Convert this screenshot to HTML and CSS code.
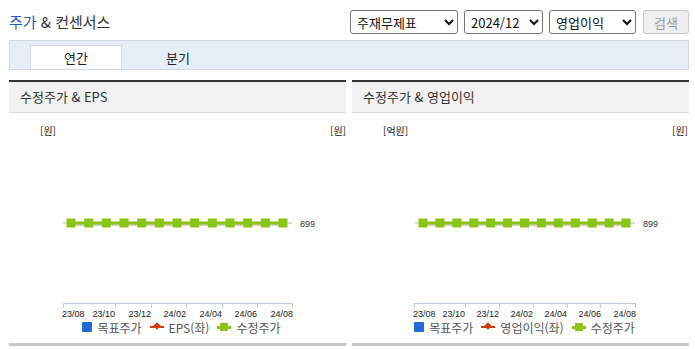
FILE: index.html
```html
<!DOCTYPE html>
<html lang="ko">

<head>
    <meta charset="UTF-8">
    <meta name="viewport" content="width=device-width, initial-scale=1.0">
    <title>주가 &amp; 컨센서스</title>
    <link rel="stylesheet" href="styles.css">
</head>

<body>
    <div class="wrap">
        <div class="top">
            <h2 class="title"><span class="accent">주가</span> &amp; 컨센서스</h2>
            <div class="filters">
                <select class="sel sel-fin">
                    <option>주재무제표</option>
                </select>
                <select class="sel sel-year">
                    <option>2024/12</option>
                </select>
                <select class="sel sel-item">
                    <option>영업이익</option>
                </select>
                <button class="btn" disabled>검색</button>
            </div>
        </div>

        <div class="tabs">
            <a class="tab on">연간</a>
            <a class="tab">분기</a>
        </div>

        <div class="charts">
            <!-- 수정주가 & EPS -->
            <div class="panel">
                <div class="panel-head">수정주가 &amp; EPS</div>
                <svg class="plot" width="337" height="205" viewBox="0 0 337 205">
                    <text class="unit" x="31" y="22">[원]</text>
                    <text class="unit" x="321" y="22">[원]</text>
                    <line x1="54" y1="110" x2="283" y2="110" stroke="#dcdcdc" stroke-width="2" />
                    <line x1="62" y1="112" x2="274" y2="112" stroke="#cfcfcf" stroke-width="2" />
                    <line x1="62" y1="110" x2="274" y2="110" stroke="#8cc414" stroke-width="3" />
                    <g fill="#8cc414">
                        <rect x="57.5" y="105.5" width="9" height="9" />
                        <rect x="75.2" y="105.5" width="9" height="9" />
                        <rect x="92.8" y="105.5" width="9" height="9" />
                        <rect x="110.5" y="105.5" width="9" height="9" />
                        <rect x="128.2" y="105.5" width="9" height="9" />
                        <rect x="145.8" y="105.5" width="9" height="9" />
                        <rect x="163.5" y="105.5" width="9" height="9" />
                        <rect x="181.2" y="105.5" width="9" height="9" />
                        <rect x="198.8" y="105.5" width="9" height="9" />
                        <rect x="216.5" y="105.5" width="9" height="9" />
                        <rect x="234.2" y="105.5" width="9" height="9" />
                        <rect x="251.8" y="105.5" width="9" height="9" />
                        <rect x="269.5" y="105.5" width="9" height="9" />
                    </g>
                    <text class="val" x="291" y="113.5">899</text>
                    <g stroke="#c3cddb" stroke-width="1">
                        <line x1="54" y1="190.5" x2="283" y2="190.5" />
                        <line x1="54.5" y1="190" x2="54.5" y2="195" />
                        <line x1="106.5" y1="190" x2="106.5" y2="195" />
                        <line x1="142.5" y1="190" x2="142.5" y2="195" />
                        <line x1="177.5" y1="190" x2="177.5" y2="195" />
                        <line x1="213.5" y1="190" x2="213.5" y2="195" />
                        <line x1="248.5" y1="190" x2="248.5" y2="195" />
                        <line x1="283.5" y1="190" x2="283.5" y2="195" />
                    </g>
                    <g class="tick">
                        <text x="53" y="203.5">23/08</text>
                        <text x="106" y="203.5" text-anchor="end">23/10</text>
                        <text x="142" y="203.5" text-anchor="end">23/12</text>
                        <text x="177" y="203.5" text-anchor="end">24/02</text>
                        <text x="213" y="203.5" text-anchor="end">24/04</text>
                        <text x="248" y="203.5" text-anchor="end">24/06</text>
                        <text x="284" y="203.5" text-anchor="end">24/08</text>
                    </g>
                </svg>
                <div class="legend">
                    <span class="lg"><i class="ico-box"></i>목표주가</span>
                    <span class="lg"><i class="ico-line red"><b></b></i>EPS(좌)</span>
                    <span class="lg"><i class="ico-line green"><b></b></i>수정주가</span>
                </div>
            </div>

            <!-- 수정주가 & 영업이익 -->
            <div class="panel">
                <div class="panel-head">수정주가 &amp; 영업이익</div>
                <svg class="plot" width="337" height="205" viewBox="0 0 337 205">
                    <text class="unit" x="31" y="22">[억원]</text>
                    <text class="unit" x="320" y="22">[원]</text>
                    <line x1="63" y1="110" x2="283" y2="110" stroke="#dcdcdc" stroke-width="2" />
                    <line x1="71" y1="112" x2="274" y2="112" stroke="#cfcfcf" stroke-width="2" />
                    <line x1="71" y1="110" x2="274" y2="110" stroke="#8cc414" stroke-width="3" />
                    <g fill="#8cc414">
                        <rect x="66.5" y="105.5" width="9" height="9" />
                        <rect x="83.4" y="105.5" width="9" height="9" />
                        <rect x="100.3" y="105.5" width="9" height="9" />
                        <rect x="117.3" y="105.5" width="9" height="9" />
                        <rect x="134.2" y="105.5" width="9" height="9" />
                        <rect x="151.1" y="105.5" width="9" height="9" />
                        <rect x="168" y="105.5" width="9" height="9" />
                        <rect x="184.9" y="105.5" width="9" height="9" />
                        <rect x="201.8" y="105.5" width="9" height="9" />
                        <rect x="218.8" y="105.5" width="9" height="9" />
                        <rect x="235.7" y="105.5" width="9" height="9" />
                        <rect x="252.6" y="105.5" width="9" height="9" />
                        <rect x="269.5" y="105.5" width="9" height="9" />
                    </g>
                    <text class="val" x="291" y="113.5">899</text>
                    <g stroke="#c3cddb" stroke-width="1">
                        <line x1="62" y1="190.5" x2="283" y2="190.5" />
                        <line x1="62.5" y1="190" x2="62.5" y2="195" />
                        <line x1="113.5" y1="190" x2="113.5" y2="195" />
                        <line x1="147.5" y1="190" x2="147.5" y2="195" />
                        <line x1="181.5" y1="190" x2="181.5" y2="195" />
                        <line x1="215.5" y1="190" x2="215.5" y2="195" />
                        <line x1="248.5" y1="190" x2="248.5" y2="195" />
                        <line x1="283.5" y1="190" x2="283.5" y2="195" />
                    </g>
                    <g class="tick">
                        <text x="61" y="203.5">23/08</text>
                        <text x="113" y="203.5" text-anchor="end">23/10</text>
                        <text x="147" y="203.5" text-anchor="end">23/12</text>
                        <text x="181" y="203.5" text-anchor="end">24/02</text>
                        <text x="215" y="203.5" text-anchor="end">24/04</text>
                        <text x="249" y="203.5" text-anchor="end">24/06</text>
                        <text x="284" y="203.5" text-anchor="end">24/08</text>
                    </g>
                </svg>
                <div class="legend">
                    <span class="lg"><i class="ico-box"></i>목표주가</span>
                    <span class="lg"><i class="ico-line red"><b></b></i>영업이익(좌)</span>
                    <span class="lg"><i class="ico-line green"><b></b></i>수정주가</span>
                </div>
            </div>
        </div>
    </div>
</body>

</html>
```

FILE: styles.css
```css
body {
    margin: 0;
    background: #fff;
    color: #333;
    font-family: "Noto Sans CJK KR", "Noto Sans", sans-serif;
}

.wrap {
    padding: 10px 6px 0 9px;
}

.top {
    display: flex;
    justify-content: space-between;
    align-items: center;
    height: 24px;
}

.title {
    margin: 0;
    font-size: 15px;
    font-weight: normal;
    color: #333;
    line-height: 24px;
}

.accent {
    color: #2c5cc5;
}

.filters {
    display: flex;
    align-items: center;
    gap: 6px;
}

.sel {
    height: 24px;
    border: 1px solid #767676;
    border-radius: 3px;
    background: #fff;
    color: #111;
    font-family: "Noto Sans CJK KR", sans-serif;
    font-size: 13px;
    padding: 0 2px;
}

.sel-fin {
    width: 108px;
}

.sel-year {
    width: 79px;
}

.sel-item {
    width: 87px;
}

.btn {
    width: 46px;
    height: 24px;
    margin-left: 1px;
    border: 1px solid #c8c8c8;
    border-radius: 3px;
    background: #efefef;
    color: #9a9a9a;
    font-family: "Noto Sans CJK KR", sans-serif;
    font-size: 13px;
    padding: 0;
}

.tabs {
    display: flex;
    align-items: flex-end;
    gap: 10px;
    height: 28px;
    margin-top: 6px;
    padding-left: 20px;
    background: #e8eef8;
    border: 1px solid #d3dae6;
}

.tab {
    width: 90px;
    height: 23px;
    line-height: 23px;
    text-align: center;
    font-size: 13px;
    color: #222;
    border: 1px solid transparent;
    border-bottom: 0;
}

.tab.on {
    background: #fff;
    border-color: #d3dae6;
}

.charts {
    display: grid;
    grid-template-columns: 337px 337px;
    gap: 6px;
    margin-top: 10px;
}

.panel {
    border-top: 2px solid #333;
    border-bottom: 3px solid #c8c8c8;
    padding-bottom: 7px;
}

.panel-head {
    height: 30px;
    line-height: 30px;
    padding-left: 11px;
    background: #f2f2f2;
    border-bottom: 1px solid #dcdcdc;
    font-size: 13px;
    color: #333;
}

.plot {
    display: block;
}

.unit {
    font-family: "Noto Sans CJK KR", sans-serif;
    font-size: 10px;
    fill: #222;
}

.val {
    font-family: "Liberation Sans", sans-serif;
    font-size: 9px;
    fill: #333;
}

.tick text {
    font-family: "Liberation Sans", sans-serif;
    font-size: 9px;
    fill: #222;
}

.legend {
    display: flex;
    justify-content: center;
    align-items: center;
    gap: 8px;
    height: 18px;
    padding-left: 8px;
    font-size: 12px;
    color: #555;
}

.lg {
    display: flex;
    align-items: center;
    gap: 5px;
}

.ico-box {
    width: 10px;
    height: 10px;
    border-radius: 1px;
    background: #1f6ad8;
}

.ico-line {
    position: relative;
    width: 14px;
    height: 2px;
}

.ico-line b {
    position: absolute;
    left: 4px;
    top: -3px;
    width: 6px;
    height: 6px;
}

.ico-line.red {
    background: #d33a0c;
}

.ico-line.red b {
    background: #d33a0c;
    transform: rotate(45deg) scale(0.9);
}

.ico-line.green {
    height: 3px;
    background: #8cc414;
}

.ico-line.green b {
    top: -3px;
    left: 3px;
    width: 8px;
    height: 8px;
    background: #8cc414;
}
```
